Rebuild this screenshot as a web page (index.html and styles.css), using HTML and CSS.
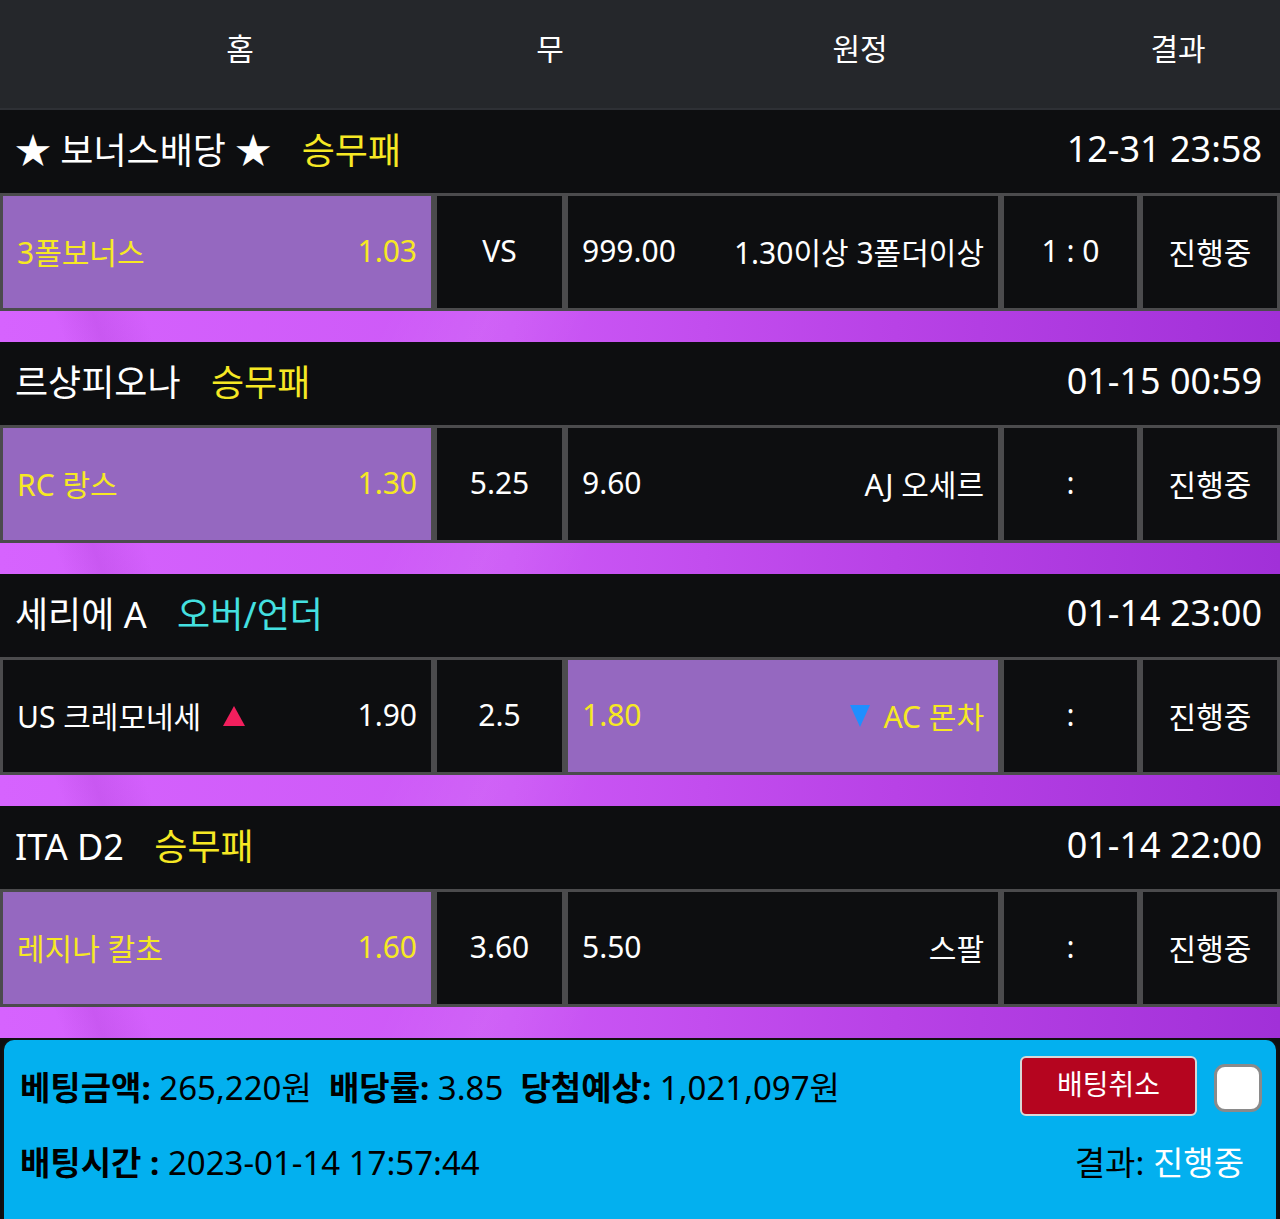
FILE: index.html
```html
<!DOCTYPE html>
<html lang="ko">
<head>
    <meta charset="UTF-8">
    <title>베팅내역</title>
    <link rel="stylesheet" href="styles.css">
</head>
<body>
    <div class="head">
        <span class="h-home">홈</span>
        <span class="h-draw">무</span>
        <span class="h-away">원정</span>
        <span class="h-result">결과</span>
    </div>

    <section class="game">
        <div class="game-title">
            <div class="league">★ 보너스배당 ★ <span class="type yellow">승무패</span></div>
            <div class="time">12-31 23:58</div>
        </div>
        <div class="odds-row">
            <div class="cell team picked"><span>3폴보너스</span><span>1.03</span></div>
            <div class="cell center">VS</div>
            <div class="cell team"><span>999.00</span><span>1.30이상 3폴더이상</span></div>
            <div class="cell center">1 : 0</div>
            <div class="cell center">진행중</div>
        </div>
        <div class="band"></div>
    </section>

    <section class="game">
        <div class="game-title">
            <div class="league">르샹피오나 <span class="type yellow">승무패</span></div>
            <div class="time">01-15 00:59</div>
        </div>
        <div class="odds-row">
            <div class="cell team picked"><span>RC 랑스</span><span>1.30</span></div>
            <div class="cell center">5.25</div>
            <div class="cell team"><span>9.60</span><span>AJ 오세르</span></div>
            <div class="cell center">:</div>
            <div class="cell center">진행중</div>
        </div>
        <div class="band"></div>
    </section>

    <section class="game">
        <div class="game-title">
            <div class="league">세리에 A <span class="type cyan">오버/언더</span></div>
            <div class="time">01-14 23:00</div>
        </div>
        <div class="odds-row">
            <div class="cell team">
                <span>US 크레모네세
                    <svg class="arrow up" width="22" height="20" viewBox="0 0 22 20"><path d="M11 0 L22 20 L0 20 Z" fill="#f21f5d"/></svg>
                </span>
                <span>1.90</span>
            </div>
            <div class="cell center">2.5</div>
            <div class="cell team picked">
                <span>1.80</span>
                <span>
                    <svg class="arrow down" width="20" height="22" viewBox="0 0 20 22"><path d="M0 0 L20 0 L10 22 Z" fill="#1f8fff"/></svg>
                    AC 몬차</span>
            </div>
            <div class="cell center">:</div>
            <div class="cell center">진행중</div>
        </div>
        <div class="band"></div>
    </section>

    <section class="game">
        <div class="game-title">
            <div class="league">ITA D2 <span class="type yellow">승무패</span></div>
            <div class="time">01-14 22:00</div>
        </div>
        <div class="odds-row">
            <div class="cell team picked"><span>레지나 칼초</span><span>1.60</span></div>
            <div class="cell center">3.60</div>
            <div class="cell team"><span>5.50</span><span>스팔</span></div>
            <div class="cell center">:</div>
            <div class="cell center">진행중</div>
        </div>
        <div class="band"></div>
    </section>

    <div class="slip">
        <div class="slip-line">
            <div class="slip-info">
                <b>베팅금액:</b> 265,220원 &nbsp;<b>배당률:</b> 3.85 &nbsp;<b>당첨예상:</b> 1,021,097원
            </div>
            <div class="slip-actions">
                <button class="cancel-btn">배팅취소</button>
                <span class="check"></span>
            </div>
        </div>
        <div class="slip-line second">
            <div class="slip-info"><b>배팅시간 :</b> 2023-01-14 17:57:44</div>
            <div class="slip-result">결과: <span class="status">진행중</span></div>
        </div>
    </div>
</body>
</html>
```

FILE: styles.css
```css
:root {
    --bg: #0d0e10;
    --line: #4b4b4d;
    --pick: #9568c0;
    --yellow: #f6e824;
    --cyan: #44e0e0;
}

body {
    margin: 0;
    background: var(--bg);
    color: #fff;
    font-family: "Noto Sans", "Noto Sans CJK KR", sans-serif;
    width: 1280px;
    height: 1219px;
    overflow: hidden;
}

.head {
    display: grid;
    grid-template-columns: 480px 140px 480px 156px;
    height: 110px;
    box-sizing: border-box;
    padding-bottom: 15px;
    align-items: center;
    background: #25272b;
    border-bottom: 2px solid #2e3035;
    font-size: 30px;
    text-align: center;
}

.game-title {
    display: flex;
    justify-content: space-between;
    align-items: center;
    height: 83px;
    box-sizing: border-box;
    padding: 0 18px 7px 15px;
    font-size: 36px;
}

.type {
    margin-left: 21px;
}

.yellow {
    color: var(--yellow);
}

.cyan {
    color: var(--cyan);
}

.odds-row {
    display: grid;
    grid-template-columns: 434px 131px 436px 139px 140px;
    height: 118px;
    font-size: 30px;
}

.cell {
    border: 3px solid var(--line);
    display: flex;
    align-items: center;
    padding: 0 14px 3px;
    box-sizing: border-box;
    min-width: 0;
    white-space: nowrap;
}

.cell.team {
    justify-content: space-between;
}

.cell.center {
    justify-content: center;
    padding: 0 0 3px;
}

.cell.picked {
    background: var(--pick);
    color: var(--yellow);
}

.arrow {
    vertical-align: middle;
    position: relative;
    top: -3px;
}

.arrow.up {
    margin-left: 14px;
}

.arrow.down {
    margin-right: 6px;
}

.band {
    height: 31px;
    background:
        linear-gradient(115deg, transparent 30%, rgba(255,255,255,0.06) 38%, transparent 46%),
        linear-gradient(70deg, transparent 5%, rgba(120,20,160,0.12) 8%, transparent 12%),
        linear-gradient(90deg, #d663fe 0%, #cc58f6 40%, #b842e6 70%, #a130d8 100%);
}

.slip {
    margin: 0 2px;
    height: 181px;
    box-sizing: border-box;
    background: #03b0ef;
    border: 2px solid #111;
    border-radius: 12px 12px 0 0;
    border-bottom: none;
    padding: 12px 14px 0 16px;
    color: #000;
    font-size: 33px;
}

.slip-line {
    display: flex;
    justify-content: space-between;
    align-items: center;
    height: 72px;
}

.slip-line.second {
    height: 78px;
}

.slip-info {
    padding-bottom: 4px;
}

.slip-info b {
    font-weight: 700;
}

.slip-actions {
    display: flex;
    align-items: center;
    gap: 17px;
}

.cancel-btn {
    width: 177px;
    height: 60px;
    margin-top: -4px;
    background: #b5051f;
    color: #fff;
    border: 2px solid #d8d8d8;
    border-radius: 6px;
    font-family: inherit;
    font-size: 28px;
    padding: 0 0 6px;
}

.check {
    display: block;
    width: 42px;
    height: 42px;
    background: #fff;
    border: 3px solid #8a8a8a;
    border-radius: 11px;
}

.slip-result {
    padding-right: 18px;
    padding-bottom: 4px;
}

.status {
    color: #fff;
}
```
